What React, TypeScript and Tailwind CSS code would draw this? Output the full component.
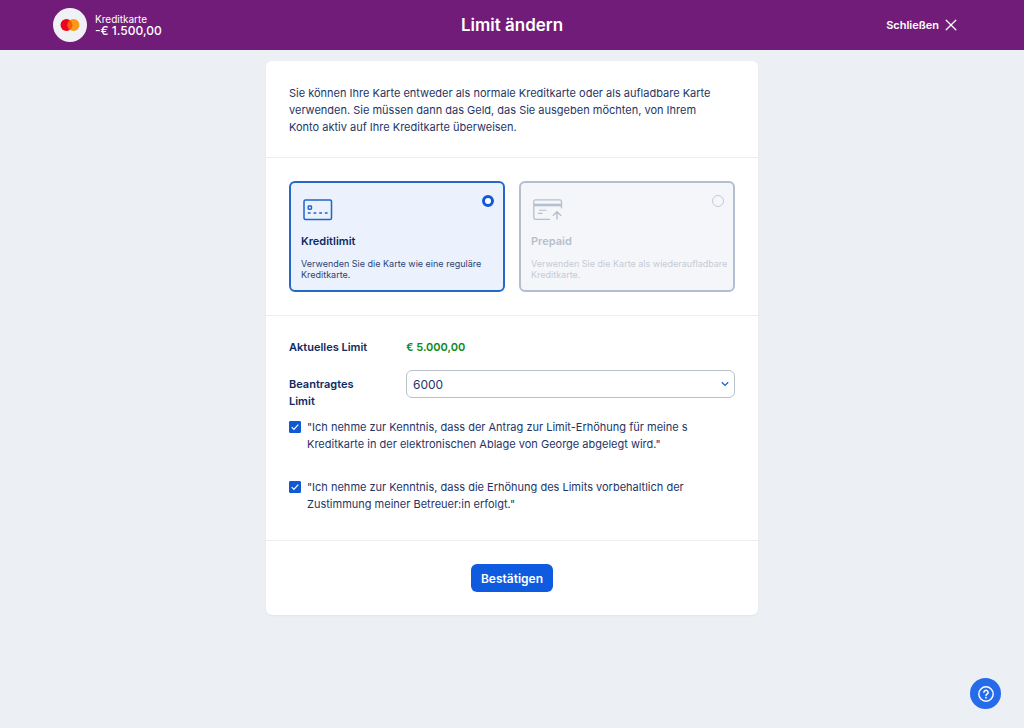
import { useState } from 'react';
import type { ReactNode } from 'react';

function CardLimitIcon() {
  return (
    <svg width="30" height="22" viewBox="0 0 30 22" fill="none" stroke="currentColor" aria-hidden="true">
      <rect x="1" y="1" width="27.5" height="19.5" rx="1.5" strokeWidth="1.5" />
      <rect x="5.2" y="7" width="3.3" height="3.3" rx="0.7" strokeWidth="1.4" />
      <path d="M4.800 14h2.800M10.500 14h2.800M16.200 14h2.800M21.800 14h2.800" strokeWidth="1.5" />
    </svg>
  );
}

function CardTopUpIcon() {
  return (
    <svg width="30" height="22" viewBox="0 0 30 22" fill="none" stroke="currentColor" aria-hidden="true">
      <path d="M17 20.3H2.5A1.8 1.8 0 0 1 .8 18.6V2.5A1.7 1.7 0 0 1 2.5.9h24.3a1.7 1.7 0 0 1 1.7 1.6v6.8" strokeWidth="1.3" />
      <path d="M1 6h27.5" strokeWidth="2.6" />
      <path d="M6 11.3h7.5M5 14.4h4.5" strokeWidth="1.1" />
      <path d="M24 20.5v-7.6M19.9 16.8l4.1-4.1 4.1 4.1" strokeWidth="1.4" />
    </svg>
  );
}

type OptionProps = {
  id: string;
  title: string;
  text: string;
  icon: ReactNode;
  checked?: boolean;
  disabled?: boolean;
};

function CardOption({ id, title, text, icon, checked, disabled }: OptionProps) {
  return (
    <label
      htmlFor={id}
      className={
        disabled
          ? 'flex min-w-0 flex-1 flex-col rounded-md border-2 border-[#b3bfd0] bg-[#f5f6f9] pt-4 pb-2.5 pl-2.5 text-[#b6bfd0]'
          : 'flex min-w-0 flex-1 cursor-pointer flex-col rounded-md border-2 border-[#2468c8] bg-[#ebf2fd] pt-4 pb-2.5 pl-2.5 text-[#0b2a63]'
      }
    >
      <span className="flex items-start justify-between pr-[9px] pl-0.5">
        <span className={disabled ? 'text-[#b3c0d0]' : 'text-[#1f63d0]'}>{icon}</span>
        <input
          id={id}
          type="radio"
          name="card-mode"
          defaultChecked={checked}
          disabled={disabled}
          className="-mt-1 size-3 appearance-none rounded-full border border-[#c3c9d3] bg-[#f5f6f9] checked:border-3 checked:border-[#1159d6] checked:bg-white"
        />
      </span>
      <span className="mt-3 text-[11px] leading-4 font-semibold">{title}</span>
      <span className={disabled ? 'mt-[9px] text-[9px] leading-[11px] text-[#c5cbd6]' : 'mt-[9px] text-[9px] leading-[11px] text-[#2b4374]'}>{text}</span>
    </label>
  );
}

function Consent({ id, children }: { id: string; children: ReactNode }) {
  return (
    <div className="flex items-start gap-1.5 pr-9">
      <span className="mt-0.5 grid size-3 shrink-0">
        <input
          id={id}
          type="checkbox"
          defaultChecked
          className="peer col-start-1 row-start-1 size-3 appearance-none rounded-[1px] border border-[#0f59d4] checked:bg-[#0f59d4]"
        />
        <svg viewBox="0 0 12 12" fill="none" stroke="white" strokeWidth="1.2" className="pointer-events-none invisible col-start-1 row-start-1 size-3 peer-checked:visible" aria-hidden="true">
          <path d="M2.7 6.2l2.2 2.2 4.4-4.8" />
        </svg>
      </span>
      <label htmlFor={id}>{children}</label>
    </div>
  );
}

export default function App() {
  const [limit, setLimit] = useState('6000');

  return (
    <div className="flex min-h-screen flex-col bg-[#eceff3] font-['Inter',sans-serif] text-[11px] leading-[17px] text-[#1f3566]">
      <header className="grid grid-cols-3 items-center bg-[#721c7a] px-[53px] py-2 text-white">
        <div className="flex items-center gap-2">
          <svg viewBox="0 0 34 34" className="size-[34px]" aria-hidden="true">
            <circle cx="17" cy="17" r="17" fill="#f0f1f4" />
            <circle cx="13.5" cy="17" r="6" fill="#e9061c" />
            <circle cx="20.5" cy="17" r="6" fill="#f79a1c" />
            <path d="M17 12.1a6 6 0 0 1 0 9.8a6 6 0 0 1 0-9.8z" fill="#fb5a08" />
          </svg>
          <div>
            <div className="text-[10px] leading-3">Kreditkarte</div>
            <div className="text-[12px] leading-3 font-medium">-€ 1.500,00</div>
          </div>
        </div>
        <h1 className="text-center text-[17px] leading-6 font-semibold">Limit ändern</h1>
        <button type="button" className="mr-3.5 flex cursor-pointer items-center gap-1.5 justify-self-end font-semibold">
          Schließen
          <svg width="12" height="12" viewBox="0 0 12 12" fill="none" stroke="currentColor" strokeWidth="1.3" strokeLinecap="round" aria-hidden="true">
            <path d="M1.2 1.2l9.6 9.6M10.8 1.2l-9.6 9.6" />
          </svg>
        </button>
      </header>

      <main className="flex justify-center py-[11px]">
        <form className="w-full max-w-[492px] divide-y divide-[#eceef2] rounded-md bg-white shadow-xs" onSubmit={(e) => e.preventDefault()}>
          <p className="pt-6 pr-9 pb-[21px] pl-[23px]">
            Sie können Ihre Karte entweder als normale Kreditkarte oder als aufladbare Karte verwenden. Sie müssen dann das Geld, das Sie ausgeben möchten, von Ihrem Konto aktiv auf Ihre Kreditkarte überweisen.
          </p>

          <fieldset aria-label="Kartenart" className="px-[23px] py-[23px]">
            <div className="flex gap-3.5">
              <CardOption id="mode-credit" title="Kreditlimit" text="Verwenden Sie die Karte wie eine reguläre Kreditkarte." icon={<CardLimitIcon />} checked />
              <CardOption id="mode-prepaid" title="Prepaid" text="Verwenden Sie die Karte als wiederaufladbare Kreditkarte." icon={<CardTopUpIcon />} disabled />
            </div>
          </fieldset>

          <div className="px-[23px] pt-[23px] pb-[27px]">
            <div className="grid grid-cols-[103px_1fr] items-start gap-x-3.5 gap-y-3.5 font-semibold text-[#0b2a63]">
              <span>Aktuelles Limit</span>
              <span className="text-[#0c8a1c]">€ 5.000,00</span>
              <label htmlFor="limit" className="pt-1.5 pr-4">
                Beantragtes Limit
              </label>
              <div className="grid items-center">
                <select
                  id="limit"
                  value={limit}
                  onChange={(e) => setLimit(e.target.value)}
                  className="col-start-1 row-start-1 h-7 w-full appearance-none rounded-md border border-[#b9c1cc] bg-white px-1.5 text-[12px] font-normal text-[#1f3566]"
                >
                  <option value="6000">6000</option>
                </select>
                <svg viewBox="0 0 8 6" fill="none" stroke="#1a62d8" strokeWidth="1.3" className="pointer-events-none col-start-1 row-start-1 mr-1.5 w-2 justify-self-end" aria-hidden="true">
                  <path d="M.8 1.2L4 4.4l3.2-3.2" />
                </svg>
              </div>
            </div>
            <div className="mt-[9px] flex flex-col gap-[26px]">
              <Consent id="consent-archive">"Ich nehme zur Kenntnis, dass der Antrag zur Limit-Erhöhung für meine s Kreditkarte in der elektronischen Ablage von George abgelegt wird."</Consent>
              <Consent id="consent-approval">"Ich nehme zur Kenntnis, dass die Erhöhung des Limits vorbehaltlich der Zustimmung meiner Betreuer:in erfolgt."</Consent>
            </div>
          </div>

          <div className="flex justify-center py-[23px]">
            <button type="submit" className="h-7 cursor-pointer rounded-md bg-[#0f5be0] px-2.5 text-[12px] font-semibold text-white">
              Bestätigen
            </button>
          </div>
        </form>
      </main>

      <button type="button" aria-label="Hilfe" className="fixed right-[23px] bottom-[19px] grid size-[31px] cursor-pointer place-items-center rounded-full bg-[#256bea] text-white">
        <svg width="16" height="16" viewBox="0 0 16 16" fill="none" stroke="currentColor" strokeWidth="1.4" strokeLinecap="round" aria-hidden="true">
          <circle cx="8" cy="8" r="7.2" />
          <path d="M5.9 6.3a2.1 2 0 1 1 3.3 1.7C8.4 8.5 8 8.8 8 9.5" strokeWidth="1.5" />
          <circle cx="8" cy="11.7" r="0.9" fill="currentColor" stroke="none" />
        </svg>
      </button>
    </div>
  );
}
